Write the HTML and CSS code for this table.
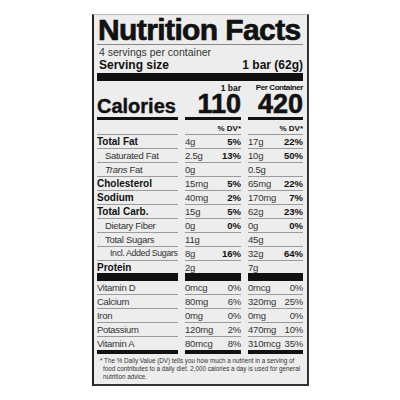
FILE: index.html
```html
<!DOCTYPE html>
<html lang="en">
<head>
  <meta charset="UTF-8" />
  <title>Nutrition Facts</title>
  <link rel="stylesheet" href="styles.css">
</head>
<body>

<div class="label">
  <h1 class="title">Nutrition Facts</h1>
  <p class="servings">4 servings per container</p>
  <div class="serving-size"><span>Serving size</span><span>1 bar (62g)</span></div>

  <div class="grid head">
    <div></div>
    <div class="right">1 bar</div>
    <div class="right per">Per Container</div>
  </div>

  <div class="grid calories">
    <div class="cal-name">Calories</div>
    <div class="right">110</div>
    <div class="right">420</div>
  </div>

  <div class="grid dv">
    <div></div>
    <div class="right">% DV*</div>
    <div class="right">% DV*</div>
  </div>

  <div class="grid row">
    <div class="name bold">Total Fat</div>
    <div class="cell"><span>4g</span><b>5%</b></div>
    <div class="cell"><span>17g</span><b>22%</b></div>
  </div>
  <div class="grid row">
    <div class="name sub">Saturated Fat</div>
    <div class="cell"><span>2.5g</span><b>13%</b></div>
    <div class="cell"><span>10g</span><b>50%</b></div>
  </div>
  <div class="grid row">
    <div class="name sub"><i>Trans</i> Fat</div>
    <div class="cell"><span>0g</span></div>
    <div class="cell"><span>0.5g</span></div>
  </div>
  <div class="grid row">
    <div class="name bold">Cholesterol</div>
    <div class="cell"><span>15mg</span><b>5%</b></div>
    <div class="cell"><span>65mg</span><b>22%</b></div>
  </div>
  <div class="grid row">
    <div class="name bold">Sodium</div>
    <div class="cell"><span>40mg</span><b>2%</b></div>
    <div class="cell"><span>170mg</span><b>7%</b></div>
  </div>
  <div class="grid row">
    <div class="name bold">Total Carb.</div>
    <div class="cell"><span>15g</span><b>5%</b></div>
    <div class="cell"><span>62g</span><b>23%</b></div>
  </div>
  <div class="grid row">
    <div class="name sub">Dietary Fiber</div>
    <div class="cell"><span>0g</span><b>0%</b></div>
    <div class="cell"><span>0g</span><b>0%</b></div>
  </div>
  <div class="grid row">
    <div class="name sub">Total Sugars</div>
    <div class="cell"><span>11g</span></div>
    <div class="cell"><span>45g</span></div>
  </div>
  <div class="grid row">
    <div class="name sub2">Incl. Added Sugars</div>
    <div class="cell"><span>8g</span><b>16%</b></div>
    <div class="cell"><span>32g</span><b>64%</b></div>
  </div>
  <div class="grid row protein">
    <div class="name bold">Protein</div>
    <div class="cell"><span>2g</span></div>
    <div class="cell"><span>7g</span></div>
  </div>

  <div class="grid row vit">
    <div class="name">Vitamin D</div>
    <div class="cell"><span>0mcg</span><span>0%</span></div>
    <div class="cell"><span>0mcg</span><span>0%</span></div>
  </div>
  <div class="grid row vit">
    <div class="name">Calcium</div>
    <div class="cell"><span>80mg</span><span>6%</span></div>
    <div class="cell"><span>320mg</span><span>25%</span></div>
  </div>
  <div class="grid row vit">
    <div class="name">Iron</div>
    <div class="cell"><span>0mg</span><span>0%</span></div>
    <div class="cell"><span>0mg</span><span>0%</span></div>
  </div>
  <div class="grid row vit">
    <div class="name">Potassium</div>
    <div class="cell"><span>120mg</span><span>2%</span></div>
    <div class="cell"><span>470mg</span><span>10%</span></div>
  </div>
  <div class="grid row vit last">
    <div class="name">Vitamin A</div>
    <div class="cell"><span>80mcg</span><span>8%</span></div>
    <div class="cell"><span>310mcg</span><span>35%</span></div>
  </div>

  <p class="note">* The % Daily Value (DV) tells you how much a nutrient in a serving of<br>food contributes to a daily diet. 2,000 calories a day is used for general<br>nutrition advice.</p>
</div>

</body>
</html>
```

FILE: styles.css
```css
* {
  box-sizing: border-box;
  margin: 0;
  padding: 0;
}
body {
  font-family: "Liberation Sans", Arial, sans-serif;
  background-color: #fff;
  color: #111;
}
.label {
  width: 217px;
  height: 372px;
  margin: 14px 0 0 92px;
  background-color: #ededed;
  border-top: 1px solid #bbb;
  border-left: 2px solid #222;
  border-right: 2px solid #333;
  border-bottom: 2px solid #333;
  padding: 0 4px 0 3px;
}
.title {
  font-size: 30px;
  font-weight: bold;
  letter-spacing: -0.6px;
  line-height: 29px;
  height: 30px;
  padding-left: 1px;
  border-bottom: 1px solid #888;
  -webkit-text-stroke: 0.7px #111;
  white-space: nowrap;
}
.servings {
  font-size: 10.5px;
  line-height: 12px;
  padding: 1px 0 0 2px;
  height: 13px;
  color: #333;
}
.serving-size {
  display: flex;
  justify-content: space-between;
  font-size: 12px;
  font-weight: bold;
  line-height: 15px;
  padding-left: 2px;
  height: 23px;
  border-bottom: 8px solid #111;
}
.grid {
  display: grid;
  grid-template-columns: 81px 56px 55px;
  column-gap: 7px;
}
.right {
  text-align: right;
}
.head {
  height: 13px;
  line-height: 12px;
  padding-top: 1px;
  font-size: 8.5px;
  font-weight: bold;
}
.head .per {
  font-size: 8px;
  letter-spacing: -0.4px;
  white-space: nowrap;
}
.calories div {
  height: 26px;
  line-height: 20px;
  border-bottom: 3px solid #111;
  font-size: 27px;
  font-weight: bold;
  -webkit-text-stroke: 0.6px #111;
}
.calories .cal-name {
  font-size: 20px;
  padding-top: 2px;
  -webkit-text-stroke: 0.4px #111;
}
.dv div {
  height: 15px;
  padding-top: 4px;
  line-height: 10px;
  font-size: 8px;
  font-weight: bold;
  border-bottom: 1px solid #999;
}
.row div {
  height: 14px;
  line-height: 13px;
  border-bottom: 1px solid #9a9a9a;
}
.name {
  font-size: 9.5px;
  letter-spacing: -0.3px;
  color: #333;
  white-space: nowrap;
}
.name.bold {
  font-size: 10px;
  letter-spacing: 0;
  font-weight: bold;
  color: #111;
}
.name.sub {
  padding-left: 8px;
}
.name.sub2 {
  padding-left: 13px;
  font-size: 8.8px;
  letter-spacing: -0.35px;
}
.cell {
  display: flex;
  justify-content: space-between;
  font-size: 9.5px;
  letter-spacing: -0.2px;
  color: #333;
  white-space: nowrap;
}
.cell b {
  font-size: 9.5px;
  letter-spacing: 0;
  color: #111;
}
.row.protein div {
  height: 20px;
  border-bottom: 8px solid #111;
}
.row.vit.last div {
  height: 17px;
  border-bottom: 4px solid #111;
}
.note {
  font-size: 6.3px;
  line-height: 8px;
  padding: 3px 0 0 6px;
  text-indent: -3px;
  color: #333;
  white-space: nowrap;
}
```
